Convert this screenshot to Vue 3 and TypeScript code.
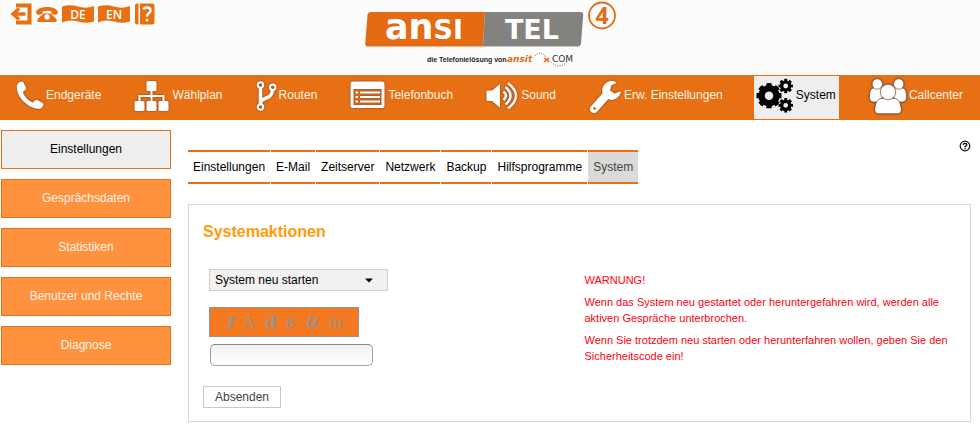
<script setup lang="ts">
import { ref } from 'vue'

type IconName =
  | 'phone' | 'sitemap' | 'branch' | 'list' | 'sound' | 'wrench' | 'gears' | 'users'

interface NavItem {
  label: string
  icon: IconName
  width: number
}

const nav: NavItem[] = [
  { label: 'Endgeräte', icon: 'phone', width: 30 },
  { label: 'Wählplan', icon: 'sitemap', width: 38 },
  { label: 'Routen', icon: 'branch', width: 23 },
  { label: 'Telefonbuch', icon: 'list', width: 38 },
  { label: 'Sound', icon: 'sound', width: 35 },
  { label: 'Erw. Einstellungen', icon: 'wrench', width: 35 },
  { label: 'System', icon: 'gears', width: 40 },
  { label: 'Callcenter', icon: 'users', width: 40 },
]
const side: string[] = ['Einstellungen', 'Gesprächsdaten', 'Statistiken', 'Benutzer und Rechte', 'Diagnose']
const tabs: string[] = ['Einstellungen', 'E-Mail', 'Zeitserver', 'Netzwerk', 'Backup', 'Hilfsprogramme', 'System']

const activeNav = ref('System')
const activeSide = ref('Einstellungen')
const activeTab = ref('System')
const action = ref('restart')
const code = ref('')
</script>

<template>
  <div class="page">
    <header class="top">
      <div class="tools">
        <a href="#" aria-label="Abmelden">
          <svg width="22" height="22" viewBox="0 0 22 22">
            <path d="M6 0.500H21.500V21.500H6V17.500H17.500V4.500H6Z" fill="#e87010" />
            <path d="M9 5.500L3 11L9 16.500M3 11H15.500" fill="none" stroke="#e87010" stroke-width="3.400" />
          </svg>
        </a>
        <a href="#" aria-label="Telefon">
          <svg width="22" height="22" viewBox="0 0 22 22">
            <path d="M0 10C0 2 22 2 22 10L20 12L15.500 11V8.500Q11 7 6.500 8.500V11L2 12Z" fill="#e87010" />
            <path d="M7.500 10.500H14.500L20.500 16V19H1.500V16Z" fill="#e87010" />
            <circle cx="11" cy="14" r="2.700" fill="#fcfcfc" />
          </svg>
        </a>
        <a v-for="l in ['DE', 'EN']" :key="l" href="#">
          <svg width="32" height="22" viewBox="0 0 32 22">
            <path d="M0 3.500Q8 1 16 3.500T32 3V18.500Q24 21 16 18.500T0 19.500Z" fill="#e87010" />
            <text x="16" y="16" class="lang">{{ l }}</text>
          </svg>
        </a>
        <a href="#" aria-label="Hilfe">
          <svg width="21" height="22" viewBox="0 0 21 22">
            <path d="M3 0.500H4.500V21.500H3Q1 21.500 1 19.500V2.500Q1 0.500 3 0.500ZM6 0.500H18.500Q20.500 0.500 20.500 2.500V19.500Q20.500 21.500 18.500 21.500H6Z" fill="#e87010" />
            <path d="M9.500 6.500Q10 4.500 13 4.500Q16.500 4.500 16.500 7.500Q16.500 9.300 14.500 10.500Q13 11.400 13 13.500" fill="none" stroke="#fff" stroke-width="2.400" />
            <circle cx="13" cy="17" r="1.500" fill="#fff" />
          </svg>
        </a>
      </div>
      <svg class="logo" width="280" height="75" viewBox="0 0 280 75" role="img" aria-label="ansi TEL 4">
        <path d="M21 12H135L133 46.500H18Q15 46.500 15.200 43.500L17.500 15Q18 12 21 12Z" fill="#e56a14" />
        <path d="M135 12H230.500Q233.500 12 233.200 15L231 43.500Q230.700 46.500 227.500 46.500H133Z" fill="#83827f" />
        <text x="74" y="39" class="brand">an<tspan class="caps">SI</tspan></text>
        <text x="182" y="39" class="brand caps">TEL</text>
        <circle cx="252" cy="15.500" r="13" fill="none" stroke="#e56a14" stroke-width="1.800" />
        <text x="252" y="24" class="four">4</text>
        <text x="77" y="62" class="claim">die Telefonielösung von</text>
        <text x="157" y="62" class="vendor">ansit</text>
        <path d="M185 56Q190 50 196 57T207 66Q213 66 217 62" fill="none" stroke="#555" stroke-dasharray="1 1.500" />
        <path d="M194 58L199 62M199 58L194 62" stroke="#e56a14" stroke-width="1.500" />
        <text x="202" y="62" class="vendor com">COM</text>
      </svg>
    </header>

    <nav class="main-nav">
      <a
        v-for="n in nav"
        :key="n.label"
        href="#"
        :class="{ active: n.label === activeNav }"
        @click.prevent="activeNav = n.label"
      >
        <svg :width="n.width" height="43" :viewBox="`0 0 ${n.width} 43`" aria-hidden="true" fill="currentColor">
          <path
            v-if="n.icon === 'phone'"
            d="M1 9C2 6.500 4 5.500 6 5.500Q7 5.500 7.500 6.500L10 11.500Q10.500 13 9 14L7 16C8 20.500 12.500 25 17 26.500L19 24.500Q20 23.500 21.500 24L26.500 27Q28 28 27.300 29.500C26 32 24.500 33 22 32.800C11 32-1 19.500 1 9Z"
          />
          <template v-else-if="n.icon === 'sitemap'">
            <rect x="12.500" y="5" width="10" height="10" rx="1.500" />
            <rect x="0.500" y="25" width="10" height="10" rx="1.500" />
            <rect x="12.500" y="25" width="10" height="10" rx="1.500" />
            <rect x="24.500" y="25" width="10" height="10" rx="1.500" />
            <path d="M17.500 14V26M5.500 26V20H29.500V26" fill="none" stroke="currentColor" stroke-width="2" />
          </template>
          <g v-else-if="n.icon === 'branch'" fill="none" stroke="currentColor">
            <path d="M4.500 12V28M4.500 27C5 21 16 24 16.500 14" stroke-width="3.500" />
            <circle cx="4.500" cy="9" r="2.700" stroke-width="2" />
            <circle cx="16.700" cy="11.300" r="2.700" stroke-width="2" />
            <circle cx="4.500" cy="31" r="2.700" stroke-width="2" />
          </g>
          <template v-else-if="n.icon === 'list'">
            <path fill-rule="evenodd" d="M3 5.500H32Q34.500 5.500 34.500 8V29.500Q34.500 32 32 32H3Q0.500 32 0.500 29.500V8Q0.500 5.500 3 5.500ZM3.500 13V29H31.500V13Z" />
            <path d="M5.500 16.500H8M10 16.500H30M5.500 21H8M10 21H30M5.500 25.500H8M10 25.500H30" stroke="currentColor" stroke-width="2" />
          </template>
          <template v-else-if="n.icon === 'sound'">
            <path d="M1.500 14.500H6L14 8V31.500L6 25H1.500Q0.500 25 0.500 24V15.500Q0.500 14.500 1.500 14.500Z" />
            <path d="M17.500 15.500Q22.500 19.700 17.500 24M19.500 11Q29.500 19.700 19.500 28.500M22 7Q38 19.700 22 32.500" fill="none" stroke="currentColor" stroke-width="2.500" />
          </template>
          <template v-else-if="n.icon === 'wrench'">
            <path d="M17 19.500L5 33" fill="none" stroke="currentColor" stroke-width="8" stroke-linecap="round" />
            <path d="M27 6.500A9 9 0 1 0 31.500 16L25.500 18L20.500 14.500L22 9Z" stroke="currentColor" stroke-width="1" stroke-linejoin="round" />
            <circle cx="5.500" cy="32.500" r="1.300" fill="#b55810" />
          </template>
          <g v-else-if="n.icon === 'gears'" fill="none" stroke="currentColor">
            <circle cx="13" cy="19.700" r="7.500" stroke-width="6.400" />
            <circle cx="13" cy="19.700" r="10.800" stroke-width="3.600" pathLength="16" stroke-dasharray="1.200 0.800" stroke-dashoffset="0.600" />
            <circle cx="29.700" cy="10" r="4.100" stroke-width="3.400" />
            <circle cx="29.700" cy="10" r="6" stroke-width="2.600" pathLength="16" stroke-dasharray="1.200 0.800" stroke-dashoffset="0.600" />
            <circle cx="29.700" cy="29.300" r="4.100" stroke-width="3.400" />
            <circle cx="29.700" cy="29.300" r="6" stroke-width="2.600" pathLength="16" stroke-dasharray="1.200 0.800" stroke-dashoffset="0.600" />
          </g>
          <g v-else stroke="#70503a" stroke-width="0.700">
            <path d="M4 12Q0.500 13 0.500 21Q0.500 26 5 26H12L15 12Z" />
            <path d="M34 12Q37.500 13 37.500 21Q37.500 26 33 26H26L23 12Z" />
            <circle cx="8.300" cy="8" r="5.200" />
            <circle cx="29.700" cy="8" r="5.200" />
            <path d="M12 22.500H26Q31 22.500 32.300 33Q32.500 37.700 28 37.700H10Q5.500 37.700 5.700 33Q7 22.500 12 22.500Z" />
            <circle cx="19" cy="16" r="7.700" />
          </g>
        </svg>
        <span>{{ n.label }}</span>
      </a>
    </nav>

    <div class="body">
      <aside class="side">
        <a
          v-for="s in side"
          :key="s"
          href="#"
          :class="{ active: s === activeSide }"
          @click.prevent="activeSide = s"
        >{{ s }}</a>
      </aside>

      <main class="content">
        <div class="tab-row">
          <nav class="tabs">
            <a
              v-for="t in tabs"
              :key="t"
              href="#"
              :class="{ active: t === activeTab }"
              @click.prevent="activeTab = t"
            >{{ t }}</a>
          </nav>
          <a href="#" class="help" aria-label="Hilfe">
            <svg width="12" height="12" viewBox="0 0 12 12">
              <circle cx="6" cy="6" r="4.800" fill="#fff" stroke="#111" stroke-width="1.200" />
              <path d="M4.200 4.900Q4.300 3.400 6 3.400Q7.800 3.400 7.800 4.800Q7.800 5.600 6 6.600V7.200" fill="none" stroke="#111" stroke-width="1.400" />
              <circle cx="6" cy="8.800" r="0.800" fill="#111" />
            </svg>
          </a>
        </div>

        <form class="panel" @submit.prevent>
          <h1>Systemaktionen</h1>
          <div class="columns">
            <div class="fields">
              <div class="select">
                <select v-model="action" aria-label="Systemaktion">
                  <option value="restart">System neu starten</option>
                </select>
                <svg width="8" height="5" viewBox="0 0 8 5" aria-hidden="true"><path d="M0 0.500H8L4 4.500Z" /></svg>
              </div>
              <svg class="captcha" width="150" height="30" viewBox="0 0 150 30" role="img" aria-label="Sicherheitscode">
                <text transform="translate(11 20) rotate(12)" font-family="DejaVu Serif" font-size="17" font-weight="700" font-style="italic">1</text>
                <text transform="translate(33 22) rotate(-9)" font-family="DejaVu Serif" font-size="16" font-style="italic">A</text>
                <text x="55" y="21" font-family="DejaVu Serif" font-size="17" font-weight="700">d</text>
                <text x="77" y="21" font-family="DejaVu Sans" font-size="16">6</text>
                <text transform="translate(98 20) rotate(8)" font-family="DejaVu Sans" font-size="16" font-weight="700" font-style="italic">U</text>
                <text x="123" y="20" font-family="DejaVu Serif" font-size="16">m</text>
              </svg>
              <input v-model="code" type="text" aria-label="Sicherheitscode" />
            </div>
            <div class="warning">
              <p>WARNUNG!</p>
              <p>Wenn das System neu gestartet oder heruntergefahren wird, werden alle aktiven Gespräche unterbrochen.</p>
              <p>Wenn Sie trotzdem neu starten oder herunterfahren wollen, geben Sie den Sicherheitscode ein!</p>
            </div>
          </div>
          <button type="submit">Absenden</button>
        </form>
      </main>
    </div>
  </div>
</template>

<style>
body {
  background: #fff;
}
</style>

<style scoped>
.page {
  font-family: "Liberation Sans", Arial, sans-serif;
  font-size: 12px;
  line-height: 16px;
  color: #000;
}
.page * {
  box-sizing: border-box;
}
a {
  color: inherit;
  text-decoration: none;
}
svg {
  display: block;
  flex: none;
}
.top {
  display: grid;
  grid-template-columns: 1fr auto 1fr;
  background: #fcfcfc;
}
.tools {
  display: flex;
  align-items: flex-start;
  gap: 4px;
  padding: 3px 0 0 10px;
}
.lang {
  font: 600 12px "Open Sans", sans-serif;
  fill: #fff;
  text-anchor: middle;
}
.brand {
  font: 700 35px "DejaVu Sans", sans-serif;
  fill: #fff;
  text-anchor: middle;
}
.caps {
  font-size: 27px;
}
.four {
  font: 700 23px "Open Sans", sans-serif;
  fill: #e56a14;
  text-anchor: middle;
}
.claim {
  font: 700 7px "Noto Sans", sans-serif;
  font-weight: 600;
  font-family: "Liberation Sans", Arial, sans-serif;
  fill: #222;
}
.vendor {
  font: italic 700 9px "DejaVu Sans", sans-serif;
  fill: #e56a14;
}
.com {
  font-style: normal;
  font-weight: 400;
  fill: #333;
}
.main-nav {
  display: flex;
  justify-content: space-between;
  padding: 1px 14px;
  background: #e87014;
  color: #fff3e4;
}
.main-nav a {
  display: flex;
  padding: 0 3px 0 2px;
}
.main-nav span {
  padding-top: 11px;
}
.main-nav svg {
  color: #fff;
  filter: drop-shadow(0 0 1px #704038);
}
.main-nav .active {
  background: #eee;
  color: #000;
}
.main-nav .active svg {
  color: #000;
  filter: none;
}
.body {
  display: flex;
  align-items: flex-start;
  gap: 17px;
  padding: 10px 9px 15px 1px;
}
.side {
  display: flex;
  flex-direction: column;
  flex: none;
  gap: 10px;
  width: 170px;
}
.side a {
  padding: 11px 0;
  border: 1px solid #e87014;
  background: #ff923f;
  color: #fff3e4;
  line-height: 15px;
  text-align: center;
}
.side .active {
  background: #eee;
  color: #000;
}
.content {
  flex: 1;
  min-width: 0;
}
.tab-row {
  display: flex;
  justify-content: space-between;
  align-items: flex-start;
  padding: 10px 0 20px;
}
.tabs {
  display: flex;
  gap: 1px;
  padding-top: 10px;
}
.tabs a {
  padding: 7px 5px;
  border: solid #e87014;
  border-width: 2px 0;
}
.tabs .active {
  background: #dcdad9;
  color: #444;
}
.panel {
  padding: 17px 14px 13px;
  border: 1px solid #d8d8d8;
}
h1 {
  margin: 0 0 27px;
  font-size: 16px;
  line-height: 20px;
  color: #ff9c06;
}
.columns {
  display: grid;
  grid-template-columns: 1fr 1fr;
  padding-left: 6px;
}
.select {
  position: relative;
  width: 179px;
}
select {
  display: block;
  width: 100%;
  height: 22px;
  padding: 0 5px;
  border: 1px solid #d0d0d0;
  border-radius: 0;
  background: #f2f1f0;
  color: #000;
  font: inherit;
  appearance: none;
}
.select svg {
  position: absolute;
  top: 9px;
  right: 15px;
  pointer-events: none;
}
.captcha {
  margin: 16px 0 7px;
  border: 1px solid #939393;
  background: #f57920;
  fill: #939393;
}
input {
  display: block;
  width: 163px;
  height: 22px;
  margin-left: 1px;
  padding: 0 5px;
  border: 1px solid #a0a0a0;
  border-top-color: #888;
  border-radius: 5px;
  background: linear-gradient(#f2f2f2, #fff);
  font: inherit;
}
.warning {
  padding: 3px 0 0 2px;
  font-size: 11px;
  color: #ff0010;
}
.warning p {
  margin: 0 0 6px;
}
button {
  display: block;
  height: 22px;
  margin-top: 16px;
  padding: 0 11px;
  border: 1px solid #c8c8c8;
  background: #fff;
  color: #444;
  font: inherit;
}
</style>
